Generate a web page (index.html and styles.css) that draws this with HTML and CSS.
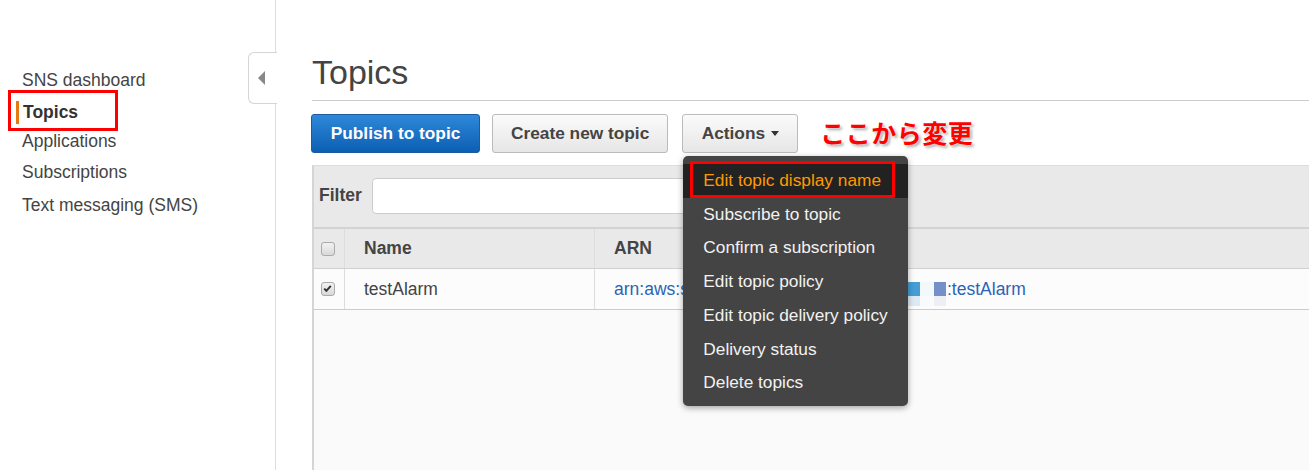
FILE: index.html
```html
<!DOCTYPE html>
<html lang="en">
<head>
<meta charset="utf-8">
<title>Topics</title>
<link rel="stylesheet" href="styles.css">
</head>
<body>
<div class="app">
  <aside class="sidebar">
    <ul class="nav">
      <li>SNS dashboard</li>
      <li class="active"><span class="active-label">Topics</span><span class="mark-box"></span></li>
      <li>Applications</li>
      <li>Subscriptions</li>
      <li>Text messaging (SMS)</li>
    </ul>
    <div class="collapse-handle"><span class="tri"></span></div>
  </aside>
  <main class="main">
    <div class="page-head">
      <h1 class="title">Topics</h1>
    </div>
    <div class="toolbar">
      <button class="btn btn-primary">Publish to topic</button>
      <button class="btn">Create new topic</button>
      <div class="dropdown">
        <button class="btn">Actions <span class="caret"></span></button>
        <ul class="menu">
          <li class="hl">Edit topic display name<span class="mark-box2"></span></li>
          <li>Subscribe to topic</li>
          <li>Confirm a subscription</li>
          <li>Edit topic policy</li>
          <li>Edit topic delivery policy</li>
          <li>Delivery status</li>
          <li>Delete topics</li>
        </ul>
      </div>
      <span class="note">ここから変更</span>
    </div>
    <section class="panel">
      <div class="filter">
        <span class="filter-label">Filter</span>
        <div class="filter-input"></div>
      </div>
      <div class="thead">
        <div class="c-check"><span class="cb"></span></div>
        <div class="c-name">Name</div>
        <div class="c-arn">ARN</div>
      </div>
      <div class="trow">
        <div class="c-check"><span class="cb checked"><svg viewBox="0 0 13 13" width="13" height="13"><path d="M3.2 6.6 L5.4 8.8 L9.8 3.8" fill="none" stroke="#333" stroke-width="2"/></svg></span></div>
        <div class="c-name">testAlarm</div>
        <div class="c-arn link"><span class="arn-prefix">arn:aws:sns</span><span class="mosaic"><i class="m1"></i><i class="m2"></i><i class="m3"></i><i class="m4"></i><i class="m5"></i><i class="m6"></i></span><span class="arn-suffix">:testAlarm</span></div>
      </div>
      <div class="tbody-empty"></div>
    </section>
  </main>
</div>
</body>
</html>
```
FILE: styles.css
```css
* { box-sizing: border-box; }
html, body { margin: 0; padding: 0; }
body {
  font-family: "Liberation Sans", Arial, sans-serif;
  font-size: 17.5px;
  color: #444;
  background: #fff;
  width: 1309px;
  height: 470px;
  overflow: hidden;
}
.app { display: flex; height: 470px; }

.sidebar {
  position: relative;
  width: 276px;
  flex: none;
  border-right: 1px solid #ddd;
}
.nav {
  list-style: none;
  margin: 65px 0 0 0;
  padding: 0;
}
.nav li {
  position: relative;
  line-height: 31px;
  padding-left: 22px;
}
.nav li:last-child { margin-top: 2px; }
.nav li.active { padding-left: 16px; line-height: 30px; }
.active-label {
  display: inline-block;
  vertical-align: middle;
  line-height: 23px;
  border-left: 3px solid #e47911;
  padding-left: 4px;
  font-weight: bold;
  color: #333;
}
.mark-box {
  position: absolute;
  left: 8px;
  top: -6px;
  width: 110px;
  height: 41px;
  border: 3px solid #f00;
}
.collapse-handle {
  position: absolute;
  left: 248px;
  top: 52px;
  width: 29px;
  height: 52px;
  background: #fff;
  border: 1px solid #d5d5d5;
  border-right: none;
  border-radius: 6px 0 0 6px;
}
.tri {
  position: absolute;
  left: 9px;
  top: 18px;
  width: 0; height: 0;
  border-top: 7px solid transparent;
  border-bottom: 7px solid transparent;
  border-right: 7px solid #888;
}

.main {
  flex: 1;
  padding-left: 36px;
  min-width: 0;
}
.page-head {
  border-bottom: 1px solid #ccc;
  padding-top: 56px;
  padding-bottom: 11px;
}
.title {
  margin: 0;
  font-size: 34px;
  line-height: 33px;
  font-weight: normal;
  color: #444;
}

.toolbar {
  display: flex;
  align-items: center;
  margin-top: 13px;
  height: 39px;
  margin-left: -1px;
}
.btn {
  font-family: "Liberation Sans", Arial, sans-serif;
  font-size: 17.3px;
  font-weight: bold;
  height: 39px;
  padding: 0 18px;
  border: 1px solid #bbb;
  border-radius: 3px;
  background: linear-gradient(#fbfbfb, #e6e6e6);
  color: #444;
  margin-right: 12px;
}
.btn-primary {
  background: linear-gradient(#2f88d9, #0b5fb4);
  border-color: #1c5c9e;
  color: #fff;
  width: 169px;
}
.dropdown { position: relative; margin-left: 2px; }
.dropdown .btn { width: 116px; padding: 0; margin-right: 0; }
.caret {
  display: inline-block;
  width: 0; height: 0;
  vertical-align: middle;
  margin-left: 1px;
  margin-top: -2px;
  border-left: 4.5px solid transparent;
  border-right: 4.5px solid transparent;
  border-top: 5px solid #333;
}
.menu {
  position: absolute;
  z-index: 10;
  left: 1px;
  top: 42px;
  width: 225px;
  margin: 0;
  padding: 8px 0 6px 0;
  list-style: none;
  background: #444;
  border-radius: 5px;
  box-shadow: 0 2px 6px rgba(0,0,0,0.35);
}
.menu li {
  position: relative;
  line-height: 33.7px;
  padding-left: 20px;
  color: #f2f2f2;
  font-size: 17.3px;
  white-space: nowrap;
}
.menu li.hl {
  background: #222;
  color: #ff9900;
}
.mark-box2 {
  position: absolute;
  left: 7px;
  top: -3px;
  width: 205px;
  height: 37px;
  border: 3px solid #f00;
}
.note {
  margin-left: 22px;
  margin-top: -4px;
  font-family: "Noto Sans CJK JP", sans-serif;
  font-weight: bold;
  font-size: 25px;
  color: #f00;
  letter-spacing: 0.5px;
  text-shadow: 0 0 2px #fff, 2px 2px 3px rgba(0,0,0,0.35);
}

.panel {
  margin-top: 12px;
  border-top: 1px solid #ddd;
  border-left: 2px solid #d5d5d5;
  height: 310px;
  background: #fafafa;
}
.filter {
  display: flex;
  align-items: center;
  height: 63px;
  background: #e9e9e9;
  padding-left: 5px;
  padding-bottom: 2px;
  border-bottom: 2px solid #d3d3d3;
}
.filter-label {
  font-weight: bold;
  width: 53px;
}
.filter-input {
  width: 508px;
  height: 36px;
  background: #fff;
  border: 1px solid #ccc;
  border-radius: 4px;
}
.thead, .trow {
  display: flex;
  align-items: stretch;
}
.thead {
  height: 40px;
  background: #e9e9e9;
  border-bottom: 1px solid #d0d0d0;
  font-weight: bold;
}
.trow {
  height: 41px;
  background: #fcfcfc;
  border-bottom: 1px solid #ccc;
}
.c-check {
  width: 31px;
  border-right: 1px solid #ddd;
  display: flex;
  align-items: center;
  padding-left: 7px;
}
.c-name {
  width: 250px;
  border-right: 1px solid #ddd;
  display: flex;
  align-items: center;
  padding-left: 19px;
}
.c-arn {
  flex: 1;
  display: flex;
  align-items: center;
  padding-left: 19px;
  white-space: nowrap;
}
.c-arn.link { color: #2a64b6; }
.cb {
  display: block;
  width: 14px;
  height: 14px;
  border: 1px solid #aaa;
  border-radius: 3px;
  background: linear-gradient(#f2f2f2, #d9d9d9);
}
.cb svg { display: block; margin: -1px 0 0 -1px; }
.arn-prefix {
  display: inline-block;
  width: 69px;
  overflow: hidden;
  margin-right: 224px;
}
.mosaic {
  display: grid;
  grid-template-columns: 13px 14px 12px;
  grid-template-rows: 14px 10px;
  margin-top: 10px;
}
.mosaic i { display: block; }
.m1 { background: #449dd5; }
.m2 { background: #f3f8fb; }
.m3 { background: #7490c8; }
.m4 { background: #dde9f3; }
.m5 { background: #f8fafc; }
.m6 { background: #eeeef5; }
.arn-suffix { margin-left: 1px; }
```
